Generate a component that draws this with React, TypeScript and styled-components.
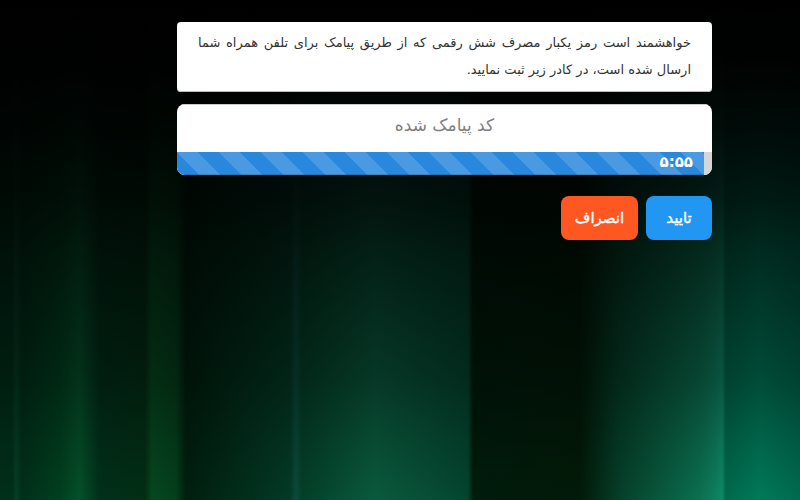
import React from "react";
import styled, { createGlobalStyle } from "styled-components";

const GlobalStyle = createGlobalStyle`
  html, body {
    margin: 0;
    height: 100%;
  }
  body {
    font-family: "DejaVu Sans", sans-serif;
    background-color: #000;
  }
`;

const Page = styled.div`
  box-sizing: border-box;
  width: 800px;
  height: 500px;
  overflow: hidden;
  padding: 22px 88px 0 177px;
  direction: rtl;
  background-image:
    linear-gradient(
      180deg,
      #000 0,
      rgba(0, 0, 0, 0.98) 60px,
      rgba(0, 0, 0, 0.9) 130px,
      rgba(0, 0, 0, 0.78) 200px,
      rgba(0, 0, 0, 0.65) 250px,
      rgba(0, 0, 0, 0.5) 320px,
      rgba(0, 0, 0, 0.38) 380px,
      rgba(0, 0, 0, 0.18) 440px,
      rgba(0, 0, 0, 0) 500px
    ),
    linear-gradient(
      90deg,
      #00301a 0,
      #00301a 12px,
      #063e24 16px,
      #00301a 22px,
      #00401f 60px,
      #05502a 80px,
      #00301a 100px,
      #022e14 145px,
      #05481f 152px,
      #043f1c 176px,
      #001f0e 186px,
      #033a26 290px,
      #0c4a3c 296px,
      #034028 302px,
      #0a5a3e 375px,
      #04452f 468px,
      #001c0c 473px,
      #021a08 580px,
      #05402a 620px,
      #0b7050 700px,
      #0e8060 716px,
      #0e8a68 722px,
      #006a4c 726px,
      #007a5a 760px,
      #006a50 800px
    );
`;

const Column = styled.main`
  display: flex;
  flex-direction: column;
  width: 535px;
`;

const Notice = styled.p`
  box-sizing: border-box;
  height: 70px;
  margin: 0 0 12px;
  padding: 7px 21px 0 21px;
  background: #fff;
  border-radius: 4px;
  box-shadow: inset 0 -1px 0 #bbb;
  color: #333;
  font-size: 13px;
  line-height: 27px;
  text-align: justify;
`;

const CodeCard = styled.div`
  display: flex;
  flex-direction: column;
  height: 71px;
  background: #fff;
  border-radius: 8px;
  overflow: hidden;
`;

const CodeInput = styled.input`
  box-sizing: border-box;
  width: 100%;
  height: 48px;
  border: 0;
  outline: 0;
  padding: 0 0 6px;
  background: transparent;
  box-shadow: inset 0 1px 0 #ccc;
  font-family: inherit;
  font-size: 17px;
  text-align: center;
  color: #555;
  &::placeholder {
    color: #808080;
    opacity: 1;
  }
`;

const Track = styled.div`
  display: flex;
  flex: 1;
  direction: ltr;
  background: #d6d6d6;
`;

const Bar = styled.div<{ $percent: number }>`
  box-sizing: border-box;
  width: ${(p) => p.$percent}%;
  padding-right: 11px;
  background-color: #2a88dc;
  background-image: linear-gradient(
    45deg,
    rgba(255, 255, 255, 0.15) 25%,
    transparent 25%,
    transparent 50%,
    rgba(255, 255, 255, 0.15) 50%,
    rgba(255, 255, 255, 0.15) 75%,
    transparent 75%,
    transparent
  );
  background-size: 42px 42px;
  box-shadow: inset 0 -1px 0 rgba(0, 0, 0, 0.15);
`;

const Timer = styled.div`
  text-align: right;
  color: #fff;
  font-size: 15px;
  font-weight: 700;
  line-height: 20px;
`;

const Actions = styled.div`
  display: flex;
  gap: 8px;
  margin-top: 21px;
`;

const ActionButton = styled.button<{ $tone: string; $wide: number }>`
  width: ${(p) => p.$wide}px;
  height: 44px;
  border: 0;
  padding: 0;
  border-radius: 8px;
  background: ${(p) => p.$tone};
  color: #fff;
  font-family: inherit;
  font-size: 15px;
  font-weight: 400;
  -webkit-text-stroke: 0.4px #fff;
`;

export default function App() {
  return (
    <>
      <GlobalStyle />
      <Page>
        <Column>
          <Notice>
            خواهشمند است رمز یکبار مصرف شش رقمی که از طریق پیامک برای تلفن همراه
            شما ارسال شده است، در کادر زیر ثبت نمایید.
          </Notice>
          <CodeCard>
            <CodeInput placeholder="کد پیامک شده" />
            <Track>
              <Bar $percent={98.5}>
                <Timer>۵:۵۵</Timer>
              </Bar>
            </Track>
          </CodeCard>
          <Actions>
            <ActionButton $tone="#2196f3" $wide={66}>
              تایید
            </ActionButton>
            <ActionButton $tone="#ff5722" $wide={77}>
              انصراف
            </ActionButton>
          </Actions>
        </Column>
      </Page>
    </>
  );
}
